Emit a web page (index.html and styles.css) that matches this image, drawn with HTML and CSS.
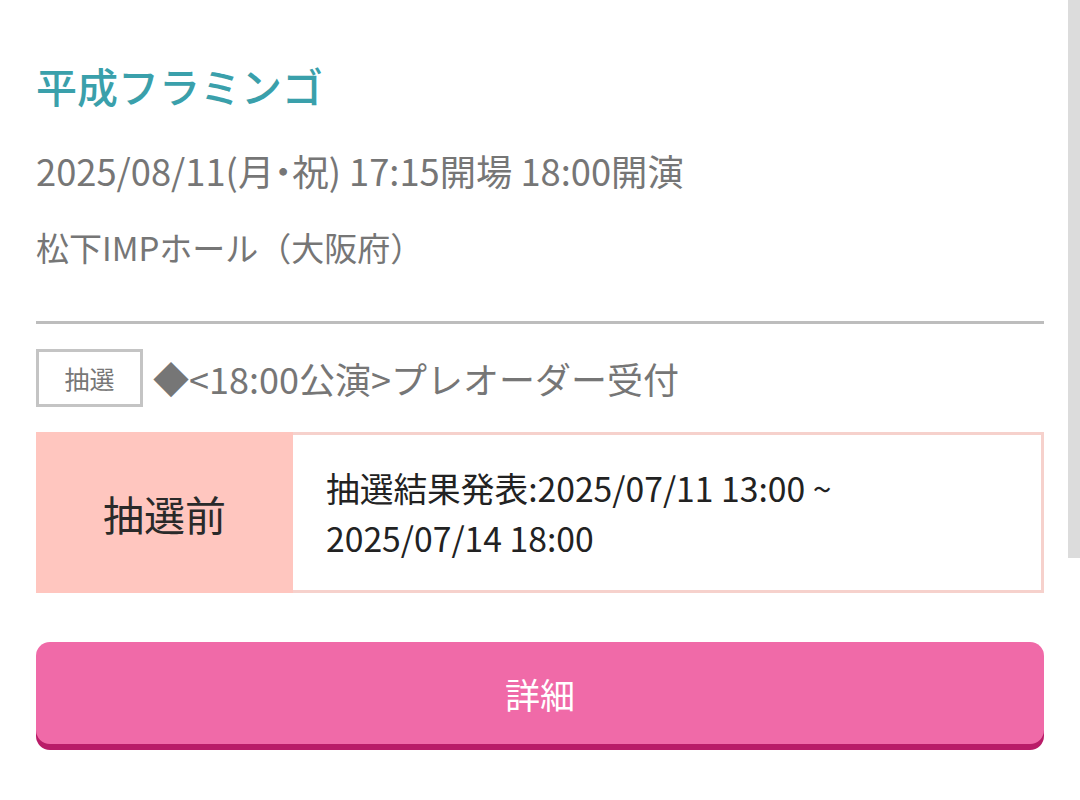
FILE: index.html
```html
<!DOCTYPE html>
<html lang="ja">
<head>
<meta charset="utf-8">
<title>平成フラミンゴ</title>
<link rel="stylesheet" href="styles.css">
</head>
<body>
<div class="page">
  <h1 class="title">平成フラミンゴ</h1>
  <p class="date">2025/08/11(月<span class="dot">・</span>祝) 17:15開場 18:00開演</p>
  <p class="venue">松下IMPホール（大阪府）</p>
  <div class="divider"></div>
  <div class="sale-head">
    <span class="badge">抽選</span>
    <span class="sale-name">◆&lt;18:00公演&gt;プレオーダー受付</span>
  </div>
  <div class="status">
    <div class="status-label">抽選前</div>
    <div class="status-text">抽選結果発表:2025/07/11 13:00 ~<br>2025/07/14 18:00</div>
  </div>
  <a class="detail-btn" href="#">詳細</a>
</div>
<div class="scroll-thumb"></div>
</body>
</html>
```
FILE: styles.css
```css
html, body {
  margin: 0;
  padding: 0;
  background: #ffffff;
}
body {
  font-family: "Noto Sans CJK JP", sans-serif;
  width: 1080px;
  height: 800px;
  overflow: hidden;
  position: relative;
}
.page {
  padding: 57px 36px 0 36px;
}
.title {
  margin: 0;
  font-size: 41px;
  line-height: 56px;
  font-weight: 500;
  color: #3aa0ab;
}
.date {
  margin: 32px 0 0 0;
  font-size: 36.3px;
  line-height: 50px;
  color: #767676;
}
.dot {
  font-feature-settings: "palt";
}
.venue {
  margin: 27px 0 0 0;
  font-size: 33px;
  line-height: 50px;
  color: #767676;
}
.divider {
  margin-top: 49px;
  height: 3px;
  background: #bdbdbd;
}
.sale-head {
  margin-top: 25px;
  display: flex;
  align-items: center;
  height: 58px;
}
.badge {
  box-sizing: border-box;
  width: 107px;
  height: 58px;
  border: 3px solid #c4c4c4;
  display: flex;
  align-items: center;
  justify-content: center;
  font-size: 25px;
  color: #777777;
}
.sale-name {
  margin-left: 10px;
  font-size: 36px;
  color: #767676;
}
.status {
  margin-top: 25px;
  box-sizing: border-box;
  height: 161px;
  border: 3px solid #f6d1cc;
  display: flex;
}
.status-label {
  width: 257px;
  margin: -3px 0 -3px -3px;
  background: #ffc6bf;
  display: flex;
  align-items: center;
  justify-content: center;
  font-size: 41px;
  color: #2a2a2a;
}
.status-text {
  padding-left: 33px;
  align-self: center;
  font-size: 33.7px;
  line-height: 50px;
  color: #222222;
}
.detail-btn {
  margin-top: 49px;
  display: flex;
  align-items: center;
  justify-content: center;
  height: 102px;
  border-radius: 14px;
  background: #f06aa8;
  box-shadow: 0 6px 0 #b91c68;
  color: #ffffff;
  text-decoration: none;
  font-size: 35px;
}
.scroll-thumb {
  position: absolute;
  top: 0;
  right: 0;
  width: 12px;
  height: 558px;
  background: #dcdcdc;
}
```
